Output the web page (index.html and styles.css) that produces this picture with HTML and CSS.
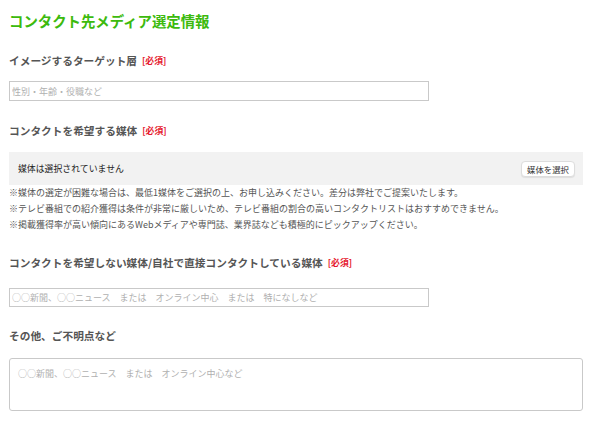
FILE: index.html
```html
<!DOCTYPE html>
<html lang="ja">
<head>
<meta charset="utf-8">
<link rel="stylesheet" href="styles.css">
</head>
<body>
<div class="page">
  <h1 class="title">コンタクト先メディア選定情報</h1>

  <section class="group group-target">
    <div class="label">イメージするターゲット層<span class="req">[必須]</span></div>
    <input class="text-input" type="text" placeholder="性別・年齢・役職など">
  </section>

  <section class="group group-media">
    <div class="label">コンタクトを希望する媒体<span class="req">[必須]</span></div>
    <div class="media-box">
      <span class="media-empty">媒体は選択されていません</span>
      <button class="media-btn" type="button">媒体を選択</button>
    </div>
    <ul class="notes">
      <li>※媒体の選定が困難な場合は、最低1媒体をご選択の上、お申し込みください。差分は弊社でご提案いたします。</li>
      <li>※テレビ番組での紹介獲得は条件が非常に厳しいため、テレビ番組の割合の高いコンタクトリストはおすすめできません。</li>
      <li>※掲載獲得率が高い傾向にあるWebメディアや専門誌、業界誌なども積極的にピックアップください。</li>
    </ul>
  </section>

  <section class="group group-exclude">
    <div class="label">コンタクトを希望しない媒体/自社で直接コンタクトしている媒体<span class="req">[必須]</span></div>
    <input class="text-input" type="text" placeholder="○○新聞、○○ニュース　または　オンライン中心　または　特になしなど">
  </section>

  <section class="group group-other">
    <div class="label">その他、ご不明点など</div>
    <textarea class="text-area" placeholder="○○新聞、○○ニュース　または　オンライン中心など"></textarea>
  </section>
</div>
</body>
</html>
```

FILE: styles.css
```css
html, body {
  margin: 0;
  padding: 0;
  background: #ffffff;
}

body {
  font-family: "Noto Sans CJK JP", "Noto Sans", sans-serif;
  color: #555555;
}

.page {
  padding: 11px 16px 0 9px;
}

.title {
  margin: 0;
  font-size: 14.4px;
  line-height: 20px;
  font-weight: 700;
  color: #3cba0d;
}

.group {
  margin: 0;
}

.group-target { margin-top: 22px; }
.group-media { margin-top: 22px; }
.group-exclude { margin-top: 22px; }
.group-other { margin-top: 21px; }

.label {
  font-size: 10.7px;
  line-height: 16px;
  font-weight: 700;
  color: #555555;
  display: flex;
  align-items: center;
}

.req {
  margin-left: 5px;
  font-size: 8.8px;
  font-weight: 700;
  color: #e5162c;
}

.text-input {
  display: block;
  box-sizing: border-box;
  width: 420px;
  height: 20px;
  margin: 12px 0 0 0;
  padding: 0 2px;
  border: 1px solid #c9c9c9;
  border-radius: 0;
  font-family: inherit;
  font-size: 9px;
  color: #333;
  outline: none;
  background: #fff;
}

.group-exclude .text-input {
  margin-top: 17px;
  height: 19px;
}

.text-input::placeholder,
.text-area::placeholder {
  color: #b0b0b0;
}

.media-box {
  margin-top: 13px;
  height: 33px;
  background: #f2f2f2;
  display: flex;
  align-items: center;
  justify-content: space-between;
  padding: 0 8px 0 9px;
}

.media-empty {
  font-size: 8.9px;
  color: #222222;
}

.media-btn {
  height: 16px;
  width: 54px;
  padding: 0;
  font-family: inherit;
  font-size: 8.4px;
  color: #333;
  background: #ffffff;
  border: 1px solid #dddddd;
  border-radius: 4px;
  box-shadow: 0 1px 1px rgba(0, 0, 0, 0.08);
  margin-top: 1px;
}

.notes {
  list-style: none;
  margin: 0;
  padding: 0;
  font-size: 9px;
  line-height: 16px;
  color: #555555;
}

.text-area {
  display: block;
  box-sizing: border-box;
  width: 574px;
  height: 53px;
  margin: 14px 0 0 0;
  padding: 8px 8px;
  border: 1px solid #c9c9c9;
  border-radius: 3px;
  font-family: inherit;
  font-size: 9px;
  line-height: 14px;
  resize: none;
  outline: none;
}
```
